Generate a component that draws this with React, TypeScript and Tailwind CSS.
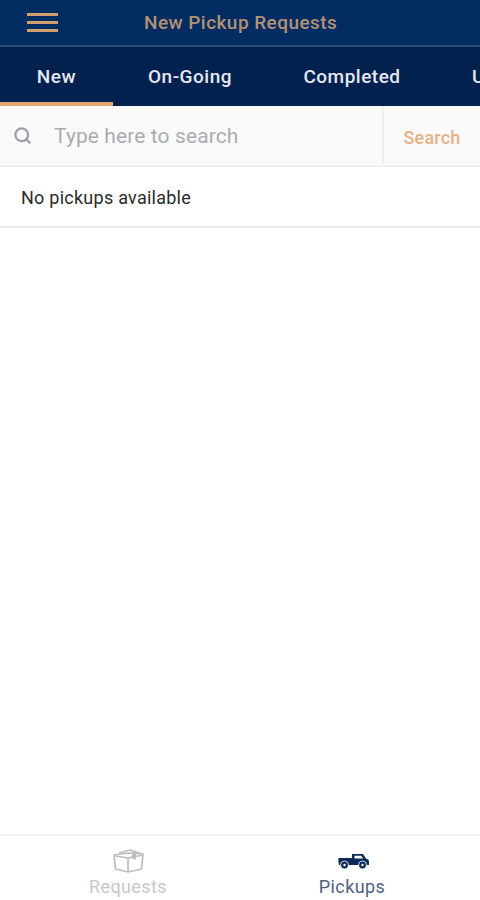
import { Search } from "lucide-react";

const font = { fontFamily: "Roboto, sans-serif" };

function BoxIcon() {
  return (
    <svg width="33" height="25" viewBox="0 0 33 25" fill="none" stroke="#bdbdbd" strokeWidth="1.7" strokeLinejoin="round">
      <path d="M2 7 L16 5 L31 6 L29.5 21 L16 24 L3.5 21 Z" />
      <path d="M3 8 L16 10 L31 7" />
      <path d="M16 10 V24" />
      <path d="M7 5 L18 2 L28 5" />
      <path d="M20 4 L24 3.5 V12 L22 10.5 L20 11 Z" fill="#bdbdbd" stroke="none" />
    </svg>
  );
}

function TruckIcon() {
  return (
    <svg width="31" height="15" viewBox="0 0 31 15" fill="#0b2a5b" className="mt-[1px] ml-[3px]">
      <path d="M0.5 4 H14 V0 H25 L28 4.5 L30 5.5 Q31 6 31 8 V11 H1 Q0 8 0.5 4 Z" />
      <path d="M16.5 1.8 V4.5 H25 L23.2 1.8 Z" fill="#ffffff" />
      <circle cx="6.5" cy="11" r="4" stroke="#ffffff" strokeWidth="0.8" />
      <circle cx="24.5" cy="11" r="4" stroke="#ffffff" strokeWidth="0.8" />
      <circle cx="6.5" cy="11" r="1.2" fill="#ffffff" />
      <circle cx="24.5" cy="11" r="1.2" fill="#ffffff" />
    </svg>
  );
}

export default function App() {
  return (
    <div className="w-[480px] h-[900px] bg-white flex flex-col overflow-hidden" style={font}>
      {/* header */}
      <div className="h-[47px] shrink-0 bg-[#032c63] border-b-2 border-[#2a4a75] flex items-center">
        <div className="ml-[27px] w-[31px] flex flex-col gap-[5px]">
          <div className="h-[3px] bg-[#cf9f6d]" />
          <div className="h-[3px] bg-[#cf9f6d]" />
          <div className="h-[3px] bg-[#cf9f6d]" />
        </div>
        <div className="ml-[86px] pt-[2px] text-[19px] tracking-[0.45px] font-medium text-[#b39273] whitespace-nowrap">New Pickup Requests</div>
      </div>

      {/* tabs */}
      <div className="h-[59px] shrink-0 bg-[#02214f] flex text-[19px] tracking-[0.5px] font-medium text-[#e3e8f0] whitespace-nowrap overflow-hidden">
        <div className="w-[113px] shrink-0 flex items-center justify-center border-b-[4px] border-[#e2a66e] pt-[5px]">New</div>
        <div className="w-[154px] shrink-0 flex items-center justify-center pt-[1px]">On-Going</div>
        <div className="w-[170px] shrink-0 flex items-center justify-center pt-[1px]">Completed</div>
        <div className="shrink-0 flex items-center pt-[1px] pl-[35px]">Unassigned</div>
      </div>

      {/* search */}
      <div className="h-[61px] shrink-0 bg-[#fafafa] border-b-2 border-[#efefef] flex items-center">
        <Search className="ml-[13px] shrink-0 text-[#9aa0a6]" size={19} strokeWidth={2.8} />
        <div className="ml-[22px] flex-1 text-[21px] tracking-[0.1px] text-[#a9adb1] pt-[3px]">Type here to search</div>
        <div className="w-[98px] h-full border-l-2 border-[#efefef] flex items-center justify-center text-[18px] tracking-[0.2px] font-medium text-[#e6b285] pt-[3px]">Search</div>
      </div>

      {/* list */}
      <div className="h-[61px] shrink-0 border-b-2 border-[#ececec] flex items-center pl-[21px] pt-[2px] text-[18px] tracking-[0.25px] text-[#2a2a2a]">
        No pickups available
      </div>

      <div className="flex-1" />

      {/* bottom nav */}
      <div className="h-[66px] shrink-0 border-t-2 border-[#f3f3f3] flex px-[16px]">
        <div className="flex-1 flex flex-col items-center pt-[12px]">
          <div className="h-[25px] flex items-center"><BoxIcon /></div>
          <div className="mt-[2px] text-[18px] tracking-[0.4px] text-[#c8c8c8] leading-[24px]">Requests</div>
        </div>
        <div className="flex-1 flex flex-col items-center pt-[12px]">
          <div className="h-[25px] flex items-center"><TruckIcon /></div>
          <div className="mt-[2px] text-[18px] tracking-[0.4px] text-[#4f6282] leading-[24px]">Pickups</div>
        </div>
      </div>
    </div>
  );
}
